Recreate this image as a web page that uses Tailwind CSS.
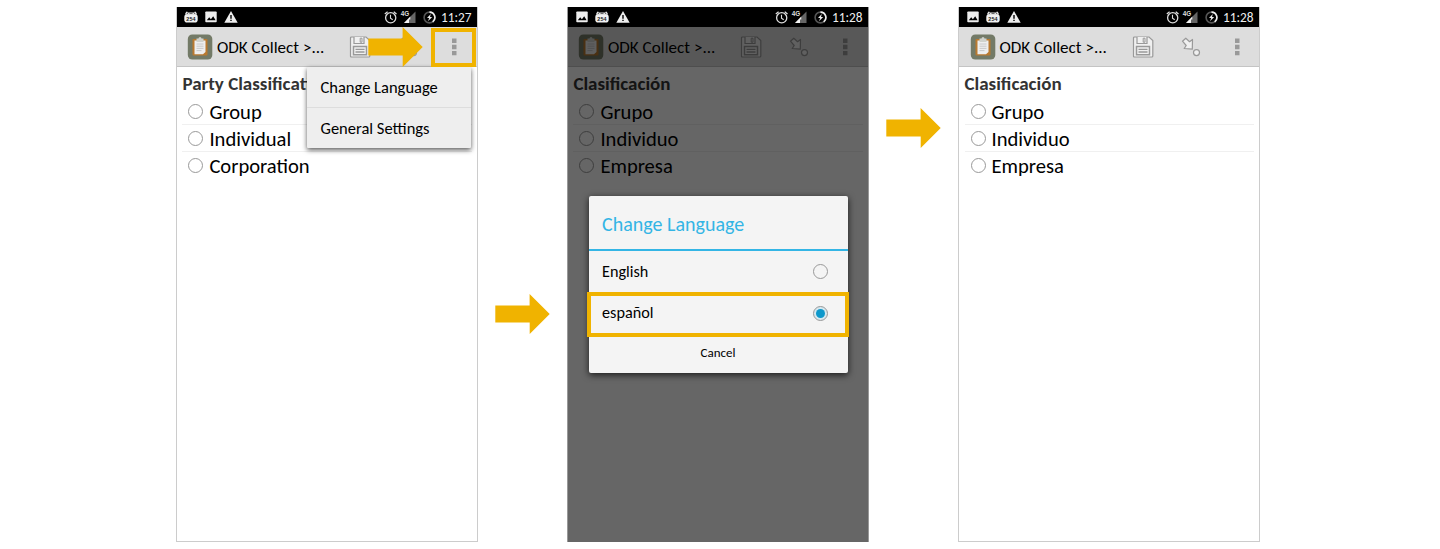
<!DOCTYPE html>
<html lang="en">
<head>
<meta charset="utf-8">
<title>Change language</title>
<script src="https://cdn.jsdelivr.net/npm/@tailwindcss/browser@4"></script>
</head>
<body class="h-[549px] overflow-hidden bg-white font-[Carlito,Lato,sans-serif] text-black">
<svg class="hidden">
  <symbol id="cal" viewBox="0 0 14 12"><path d="M2 .8h1.500v.7h7V.8H12v1h.7v2H1.300v-2H2z" fill="#e4e4e4"/><path d="M2.800 2.500h1.200M5.500 2.500h3M10 2.500h1.200" stroke="#333" stroke-width=".7"/><rect x=".3" y="3.300" width="13.400" height="8.200" rx="2.800" fill="#f2f2f2"/><text x="7" y="9.500" text-anchor="middle" font-size="5.400" font-weight="700" fill="#222" font-family="Liberation Sans" letter-spacing=".2">254</text></symbol>
  <symbol id="pic" viewBox="0 0 12 12"><rect x=".3" y=".5" width="11.400" height="10.700" rx=".8" fill="#eee"/><path d="M1.800 9.200l2.400-3 1.700 2 2.300-3 2.400 4z" fill="#000"/></symbol>
  <symbol id="warn" viewBox="0 0 14 12"><path d="M7 0L13.700 11.700H.3z" fill="#eee"/><path d="M6.300 4h1.400v3.700H6.300zM6.300 8.700h1.400v1.400H6.300z" fill="#000"/></symbol>
  <symbol id="alarm" viewBox="0 0 13 13"><g fill="none" stroke="#ddd"><circle cx="6.700" cy="6.800" r="5.100" stroke-width="1.300"/><path d="M6.500 3.800v3.300l2.200 1.600" stroke-width="1.100"/><path d="M.8 2.900L3.600.7M12.500 2.900L9.700.7" stroke-width="1.300"/></g></symbol>
  <symbol id="signal" viewBox="0 0 16 14"><path d="M15.500 1.500V13H4z" fill="#666"/><path d="M10.300 6.600V9.500H9V13H4z" fill="#f2f2f2"/><text x=".8" y="6" font-size="7" font-weight="700" fill="#ddd" font-family="Liberation Sans" textLength="8.500" lengthAdjust="spacingAndGlyphs">4G</text></symbol>
  <symbol id="batt" viewBox="0 0 13 13"><circle cx="6.500" cy="6.500" r="5.400" fill="none" stroke="#555" stroke-width="1.600"/><path d="M6.500 1.100a5.400 5.400 0 0 1 3.200 9.700" fill="none" stroke="#eee" stroke-width="1.600"/><path d="M7.800 3L4 7h2.200L5 10.200 9.200 6H7z" fill="#eee"/></symbol>
  <symbol id="clip" viewBox="0 0 26 26"><rect x=".8" y=".5" width="24.500" height="25" rx="4.500" fill="#737a67"/><rect x="5.500" y="5" width="15" height="16.500" rx="1" fill="#b9792f"/><path d="M7.500 6.500h11v11.500l-2.500 2.300H7.500z" fill="#eee"/><path d="M9.500 4.600h2a1.500 1.500 0 0 1 3 0h2V8h-7z" fill="#d0d2cc"/><path d="M9.500 10h7M9.500 12.200h7M9.500 14.400h7M9.500 16.600h5" stroke="#c4c4c4" stroke-width=".9"/></symbol>
  <symbol id="save" viewBox="0 0 22 22"><path d="M1.500 2Q1.500 1 2.500 1H17l3.800 3.500V20q0 1-1 1H2.500q-1 0-1-1z" fill="#f0f0f0" stroke="#999" stroke-width="1.200"/><path d="M5 1v6.500h10V1" fill="#f0f0f0" stroke="#999" stroke-width="1.200"/><path d="M11.200 2.200h1.800v4h-1.800z" fill="#f0f0f0" stroke="#999"/><path d="M4.500 18.800V10.500h13v8.300z" fill="#f0f0f0" stroke="#999" stroke-width="1.500"/><path d="M6.500 13.300h9M6.500 16h9" stroke="#999" stroke-width="1.300"/></symbol>
  <symbol id="jump" viewBox="0 0 20 20"><path d="M1.500 4.200L4.800 1.200l3.800 3.500L11.500 2.500l-.2 9.700L3.200 11.500l2-3z" fill="#f0f0f0" stroke="#999" stroke-width="1.200" stroke-linejoin="round"/><circle cx="15.500" cy="15.600" r="3" fill="#f0f0f0" stroke="#999" stroke-width="1.200"/></symbol>
  <symbol id="dots" viewBox="0 0 6 18"><path d="M1 .5h4.500v4.500H1zM1 6.700h4.500v4.500H1zM1 12.900h4.500v4.300H1z" fill="#999"/></symbol>
  <symbol id="arrow" viewBox="0 0 55 40"><path d="M.3 11.500h34.300V0L54.700 20l-20 20V28.500H.3z" fill="#f0b300"/></symbol>
</svg>
<main class="flex pt-[7px] pl-[176px]">

  <section class="relative h-[535px] w-[302px] shrink-0 border border-t-0 border-[#ccc]">
    <div class="flex h-5 items-center bg-black pr-1.5 pl-[7px] text-[#eee]">
      <svg class="h-3 w-3.5"><use href="#cal"/></svg>
      <svg class="ml-[7px] h-3 w-3"><use href="#pic"/></svg>
      <svg class="ml-[7px] h-3 w-3.5"><use href="#warn"/></svg>
      <svg class="ml-auto h-[13px] w-[13px]"><use href="#alarm"/></svg>
      <svg class="ml-[3px] h-3.5 w-4"><use href="#signal"/></svg>
      <svg class="ml-[7px] h-[13px] w-[13px]"><use href="#batt"/></svg>
      <span class="ml-[5px] w-[30px] pt-px text-[13.3px] leading-5">11:27</span>
    </div>
    <header class="flex h-10 items-center border-b border-[#c4c4c4] bg-[#ddd]">
      <svg class="ml-2.5 h-[26px] w-[26px]"><use href="#clip"/></svg>
      <h1 class="ml-1 w-[120px] pt-0.5 text-[17.1px] leading-5">ODK Collect &gt;...</h1>
      <svg class="ml-3 h-[22px] w-[22px]"><use href="#save"/></svg>
      <svg class="ml-[27px] h-5 w-5"><use href="#jump"/></svg>
      <svg class="ml-[33px] h-[18px] w-1.5"><use href="#dots"/></svg>
    </header>
    <div class="pr-[5px] pl-[5.4px] pt-[5px]">
      <h2 class="h-[26px] text-[19px] leading-[24px] font-bold whitespace-nowrap text-[#333]">Party Classification</h2>
      <div class="flex h-[27px] items-center border-b border-[#f0f0f0] pl-1.5"><i class="mr-1.5 h-[15px] w-[15px] rounded-full border border-[#999]"></i><span class="pt-0.5 text-[20.6px] leading-6">Group</span></div>
      <div class="flex h-[27px] items-center border-b border-[#f0f0f0] pl-1.5"><i class="mr-1.5 h-[15px] w-[15px] rounded-full border border-[#999]"></i><span class="pt-0.5 text-[20.6px] leading-6">Individual</span></div>
      <div class="flex h-[27px] items-center pl-1.5"><i class="mr-1.5 h-[15px] w-[15px] rounded-full border border-[#999]"></i><span class="text-[20.6px] leading-6">Corporation</span></div>
    </div>
    <nav class="absolute top-[60px] left-[130px] w-[164px] rounded-[1px] bg-[#eee] text-[16.5px] shadow-[0_2px_5px_rgba(0,0,0,0.65)]">
      <div class="h-[41px] border-b border-[#ddd] pl-[13.5px] leading-[41px]">Change Language</div>
      <div class="h-10 pl-[13.5px] leading-[40px]">General Settings</div>
    </nav>
    <svg class="absolute top-5 left-[191px] h-10 w-[55px]"><use href="#arrow"/></svg>
    <div class="absolute top-[21px] left-[254px] h-[39px] w-[45px] border-4 border-[#f0b300]"></div>
  </section>

  <div class="w-[89px] shrink-0 pt-[287px] pl-[17px]"><svg class="h-10 w-[55px]"><use href="#arrow"/></svg></div>

  <section class="relative h-[535px] w-[302px] shrink-0 border-x border-[#999]">
    <div class="flex h-5 items-center bg-black pr-1.5 pl-2 text-[#eee]">
      <svg class="h-3 w-3"><use href="#pic"/></svg>
      <svg class="ml-[7px] h-3 w-3.5"><use href="#cal"/></svg>
      <svg class="ml-[7px] h-3 w-3.5"><use href="#warn"/></svg>
      <svg class="ml-auto h-[13px] w-[13px]"><use href="#alarm"/></svg>
      <svg class="ml-[3px] h-3.5 w-4"><use href="#signal"/></svg>
      <svg class="ml-[7px] h-[13px] w-[13px]"><use href="#batt"/></svg>
      <span class="ml-[5px] w-[30px] pt-px text-[13.3px] leading-5">11:28</span>
    </div>
    <header class="flex h-10 items-center border-b border-[#c4c4c4] bg-[#ddd]">
      <svg class="ml-2.5 h-[26px] w-[26px]"><use href="#clip"/></svg>
      <h1 class="ml-1 w-[120px] pt-0.5 text-[17.1px] leading-5">ODK Collect &gt;...</h1>
      <svg class="ml-3 h-[22px] w-[22px]"><use href="#save"/></svg>
      <svg class="ml-[27px] h-5 w-5"><use href="#jump"/></svg>
      <svg class="ml-[33px] h-[18px] w-1.5"><use href="#dots"/></svg>
    </header>
    <div class="pr-[5px] pl-[5.4px] pt-[5px]">
      <h2 class="h-[26px] text-[19px] leading-[24px] font-bold text-[#333]">Clasificación</h2>
      <div class="flex h-[27px] items-center border-b border-[#f0f0f0] pl-1.5"><i class="mr-1.5 h-[15px] w-[15px] rounded-full border border-[#999]"></i><span class="pt-0.5 text-[20.6px] leading-6">Grupo</span></div>
      <div class="flex h-[27px] items-center border-b border-[#f0f0f0] pl-1.5"><i class="mr-1.5 h-[15px] w-[15px] rounded-full border border-[#999]"></i><span class="pt-0.5 text-[20.6px] leading-6">Individuo</span></div>
      <div class="flex h-[27px] items-center pl-1.5"><i class="mr-1.5 h-[15px] w-[15px] rounded-full border border-[#999]"></i><span class="text-[20.6px] leading-6">Empresa</span></div>
    </div>
    <div class="absolute inset-x-0 top-5 bottom-0 bg-black/60"></div>
    <div class="absolute top-[189px] left-[20.5px] w-[259px] rounded-[2px] bg-[#f4f4f4] shadow-[0_2px_7px_rgba(0,0,0,0.75)]">
      <h3 class="h-[55px] border-b-2 border-[#33b5e5] pl-[13.5px] text-[20px] leading-[56px] text-[#33b5e5]">Change Language</h3>
      <div class="flex h-[41px] items-center pr-[19.5px] pl-[13.5px] text-[16.2px]"><span class="mr-auto pt-0.5">English</span><i class="h-[15px] w-[15px] rounded-full border border-[#999]"></i></div>
      <div class="-mx-[1.5px] flex h-[45px] items-center border-4 border-[#f0b300] pr-[17px] pb-[3px] pl-[11px] text-[16.2px]"><span class="mr-auto pt-px">español</span><i class="flex h-[15px] w-[15px] items-center justify-center rounded-full border border-[#999] bg-[#d5e8f0]"><b class="h-[9px] w-[9px] rounded-full bg-[#0d98cb]"></b></i></div>
      <div class="h-9 text-center text-[13px] leading-[32px]">Cancel</div>
    </div>
  </section>

  <div class="w-[89px] shrink-0 pt-[101px] pl-[17px]"><svg class="h-10 w-[55px]"><use href="#arrow"/></svg></div>

  <section class="h-[535px] w-[302px] shrink-0 border border-t-0 border-[#ccc]">
    <div class="flex h-5 items-center bg-black pr-1.5 pl-2 text-[#eee]">
      <svg class="h-3 w-3"><use href="#pic"/></svg>
      <svg class="ml-[7px] h-3 w-3.5"><use href="#cal"/></svg>
      <svg class="ml-[7px] h-3 w-3.5"><use href="#warn"/></svg>
      <svg class="ml-auto h-[13px] w-[13px]"><use href="#alarm"/></svg>
      <svg class="ml-[3px] h-3.5 w-4"><use href="#signal"/></svg>
      <svg class="ml-[7px] h-[13px] w-[13px]"><use href="#batt"/></svg>
      <span class="ml-[5px] w-[30px] pt-px text-[13.3px] leading-5">11:28</span>
    </div>
    <header class="flex h-10 items-center border-b border-[#c4c4c4] bg-[#ddd]">
      <svg class="ml-[10.5px] h-[26px] w-[26px]"><use href="#clip"/></svg>
      <h1 class="ml-1 w-[120px] pt-0.5 text-[17.1px] leading-5">ODK Collect &gt;...</h1>
      <svg class="ml-3 h-[22px] w-[22px]"><use href="#save"/></svg>
      <svg class="ml-[27px] h-5 w-5"><use href="#jump"/></svg>
      <svg class="ml-[33px] h-[18px] w-1.5"><use href="#dots"/></svg>
    </header>
    <div class="pr-[5px] pl-[5.5px] pt-[5px]">
      <h2 class="h-[26px] text-[19px] leading-[24px] font-bold text-[#333]">Clasificación</h2>
      <div class="flex h-[27px] items-center border-b border-[#f0f0f0] pl-1.5"><i class="mr-1.5 h-[15px] w-[15px] rounded-full border border-[#999]"></i><span class="pt-0.5 text-[20.6px] leading-6">Grupo</span></div>
      <div class="flex h-[27px] items-center border-b border-[#f0f0f0] pl-1.5"><i class="mr-1.5 h-[15px] w-[15px] rounded-full border border-[#999]"></i><span class="pt-0.5 text-[20.6px] leading-6">Individuo</span></div>
      <div class="flex h-[27px] items-center pl-1.5"><i class="mr-1.5 h-[15px] w-[15px] rounded-full border border-[#999]"></i><span class="text-[20.6px] leading-6">Empresa</span></div>
    </div>
  </section>
</main>
</body>
</html>
